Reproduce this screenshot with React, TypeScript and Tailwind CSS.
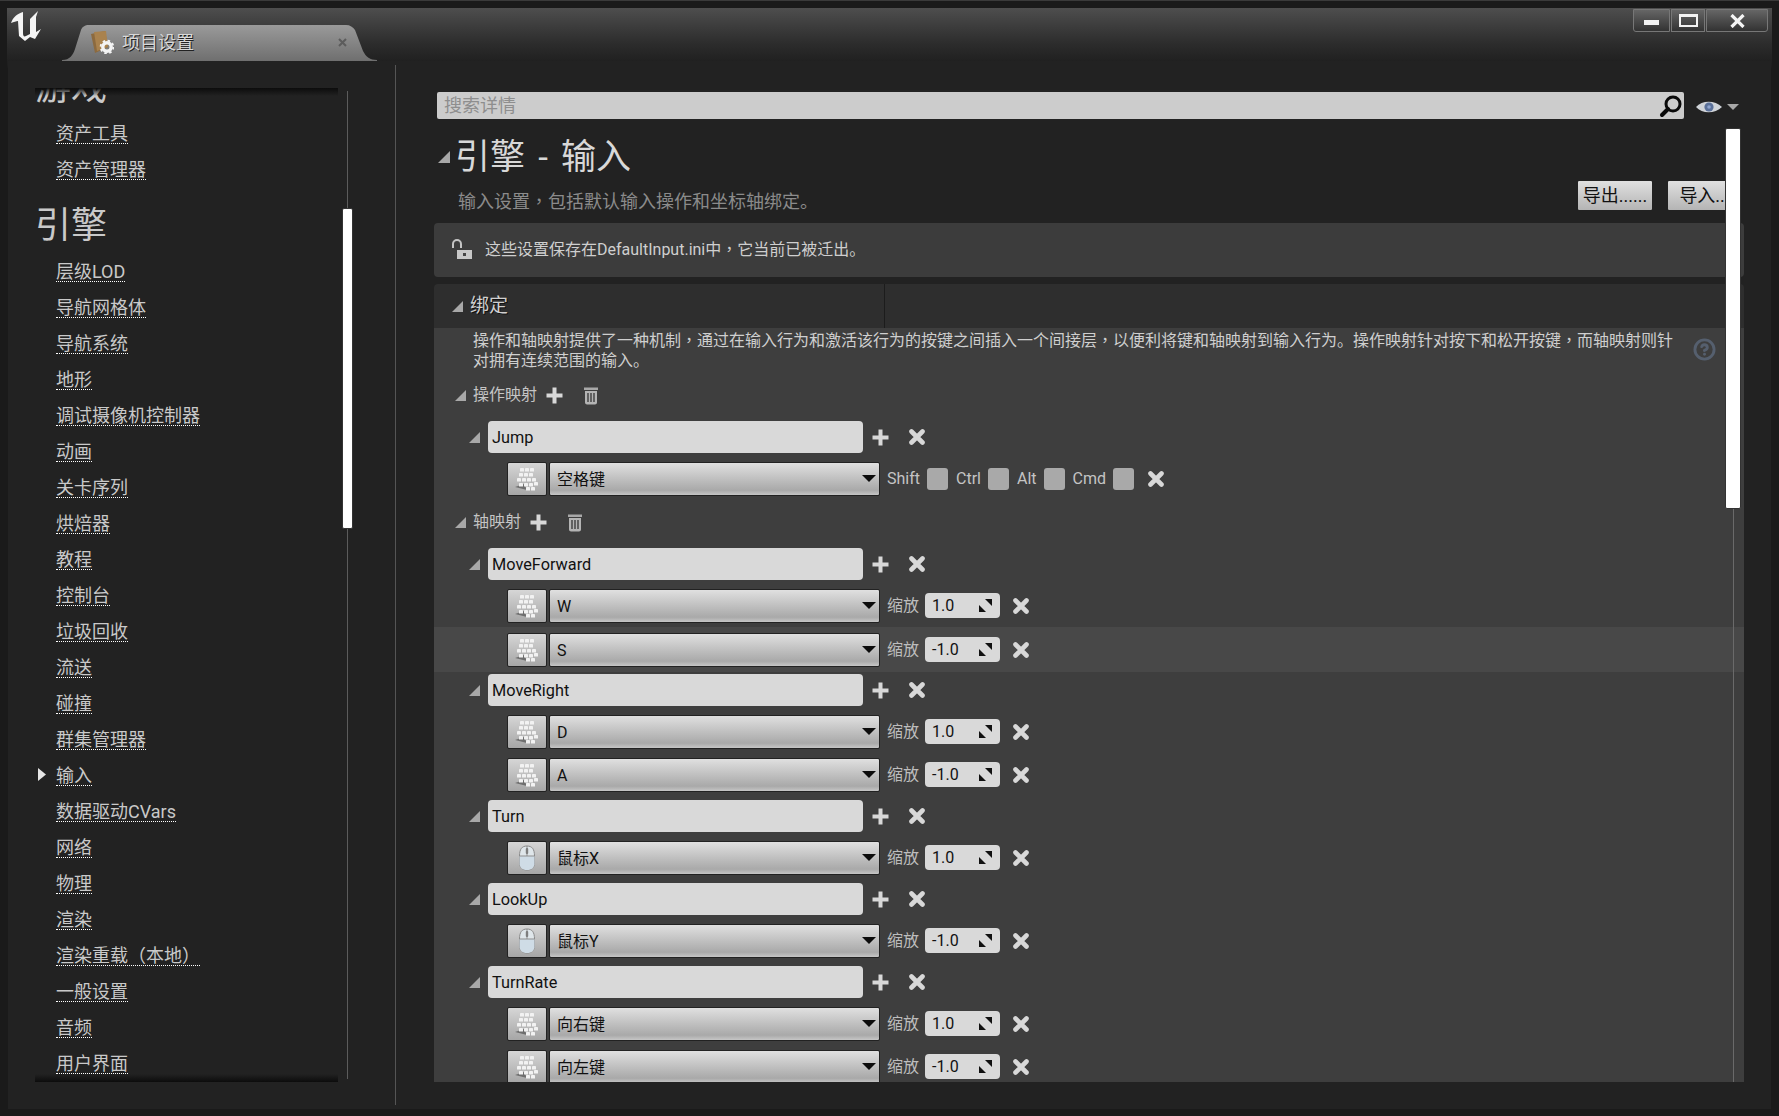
import { FC, ReactNode } from 'react'
import { CircleHelp } from 'lucide-react'

const sidebarTop = ['资产工具', '资产管理器']
const sidebarEngine = [
  '层级LOD', '导航网格体', '导航系统', '地形', '调试摄像机控制器', '动画', '关卡序列', '烘焙器', '教程', '控制台', '垃圾回收', '流送',
  '碰撞', '群集管理器', '输入', '数据驱动CVars', '网络', '物理', '渲染', '渲染重载（本地）', '一般设置', '音频', '用户界面',
]

// the reference centres full-width punctuation, the TC face does that too
const Punct: FC<{ children: ReactNode }> = ({ children }) => (
  <span className="font-['Noto_Sans_CJK_TC']">{children}</span>
)

const Triangle: FC<{ size?: number; color?: string }> = ({ size = 11, color = '#a8a8a8' }) => (
  <svg width={size} height={size} viewBox="0 0 10 10" className="shrink-0">
    <polygon points="10,0 10,10 0,10" fill={color} />
  </svg>
)

const PlusIcon = () => (
  <svg width="17" height="17" viewBox="0 0 17 17" className="shrink-0">
    <path d="M6.500 0.500h4v6h6v4h-6v6h-4v-6h-6v-4h6z" fill="#d8d8d8" />
  </svg>
)

const CrossIcon = () => (
  <svg width="16" height="16" viewBox="0 0 16 16" className="shrink-0">
    <path d="M2.500 2.500L13.500 13.500M13.500 2.500L2.500 13.500" stroke="#d8d8d8" strokeWidth="4.600" strokeLinecap="round" />
  </svg>
)

const TrashIcon = () => (
  <svg width="16" height="19" viewBox="0 0 16 19" className="shrink-0">
    <path d="M1 1.500h14v2.500H1z" fill="#a8a8a8" />
    <path d="M2 5h12v11.500c0 1-1 2-2 2H4c-1 0-2-1-2-2z" fill="#b4b4b4" />
    <path d="M5 7v9M8 7v9M11 7v9" stroke="#3e3e3e" strokeWidth="1.400" />
  </svg>
)

const KeyboardIcon = () => (
  <svg width="24" height="24" viewBox="0 0 24 24" className="-ml-[2px]">
    <path d="M1 20l12 3-3-6z" fill="#6e6e6e" />
    {[
      [6, 1], [11, 1], [16, 1],
      [5, 6], [10, 6], [15, 6],
      [3, 11], [8, 11], [13, 11], [18, 11],
      [5, 16], [10, 16], [15, 16], [20, 15],
      [12, 20], [17, 20],
    ].map(([x, y], i) => (
      <rect key={i} x={x} y={y} width="4" height="3.600" rx="0.400" fill="#f2f2f2" />
    ))}
  </svg>
)

const MouseIcon = () => (
  <svg width="18" height="26" viewBox="0 0 18 26">
    <path d="M1.500 11C1.500 4 4 1 9 1s7.500 3 7.500 10v7c0 4.500-3 7-7.500 7s-7.500-2.500-7.500-7z" fill="#dfe6ea" stroke="#8a8a8a" />
    <path d="M1.500 11h15v7c0 4.500-3 7-7.500 7s-7.500-2.500-7.500-7z" fill="#cfdce6" />
    <path d="M9 1v10M1.500 11h15" stroke="#8f8f8f" strokeWidth="1" />
    <rect x="7.800" y="3" width="2.400" height="6" rx="1" fill="#7d7d7d" />
  </svg>
)

const ScaleArrow = () => (
  <svg width="13" height="13" viewBox="0 0 13 13" className="shrink-0">
    <polygon points="6,0 13,0 13,7" fill="#111" />
    <polygon points="0,6 0,13 7,13" fill="#111" />
  </svg>
)

const Group: FC<{ label: string }> = ({ label }) => (
  <div className="h-[44px] flex items-center pl-[21px] text-[16px] text-[#c4c4c4]">
    <Triangle />
    <span className="ml-[7px] mr-[9px]">{label}</span>
    <PlusIcon />
    <span className="ml-[20px]"><TrashIcon /></span>
  </div>
)

const Mapping: FC<{ name: string }> = ({ name }) => (
  <div className="relative h-[40px] flex items-center pl-[35px]">
    <Triangle />
    <div className="ml-[8px] w-[375px] h-[32px] rounded-[4px] bg-[#d9d9d9] pl-[4px] pt-[2px] flex items-center text-[16.300px] text-[#111]">{name}</div>
    <span className="ml-[9px]"><PlusIcon /></span>
    <span className="ml-[20px]"><CrossIcon /></span>
  </div>
)

const KeyRow: FC<{ label: string; mouse?: boolean; active?: boolean; children: ReactNode }> = ({ label, mouse, active, children }) => (
  <div className={`flex items-center pl-[73px] ${active ? 'h-[45px] -mb-[2px] bg-[#484848]' : 'h-[43px]'}`}>
    <div className="w-[40px] h-[34px] rounded-[2px] border border-[#222] bg-linear-to-b from-[#d6d6d6] to-[#a6a6a6] flex items-center justify-center">
      {mouse ? <MouseIcon /> : <KeyboardIcon />}
    </div>
    <div className="ml-[2px] w-[331px] h-[34px] rounded-[2px] border border-[#222] bg-linear-to-b from-[#e0e0e0] via-[#a9a9a9] via-85% to-[#c6c6c6] flex items-center justify-between pl-[7px] pr-[3px] text-[16px] text-[#111]">
      <span className="pt-[2px]">{label}</span>
      <svg width="14" height="7" viewBox="0 0 14 7"><polygon points="0,0 14,0 7,7" fill="#0c0c0c" /></svg>
    </div>
    {children}
  </div>
)

const Scale: FC<{ value: string }> = ({ value }) => (
  <>
    <span className="ml-[7px] pt-px text-[16px] text-[#bdbdbd]">缩放</span>
    <div className="ml-[6px] w-[75px] h-[25px] rounded-[4px] bg-[#d9d9d9] flex items-center justify-between pl-[7px] pr-[8px] text-[16px] text-[#111]">
      <span className="pt-px">{value}</span>
      <ScaleArrow />
    </div>
    <span className="ml-[13px]"><CrossIcon /></span>
  </>
)

const Check: FC<{ label: string; gap: string }> = ({ label, gap }) => (
  <>
    <span className={`text-[16px] text-[#c4c4c4] ${gap}`}>{label}</span>
    <div className="ml-[7px] w-[21px] h-[22px] rounded-[3px] bg-[#a9a9a9]" />
  </>
)

const NavItem: FC<{ label: string; selected?: boolean }> = ({ label, selected }) => (
  <div className="relative h-[36px] flex items-center pl-[21px]">
    {selected && (
      <svg width="8" height="13" viewBox="0 0 8 13" className="absolute left-[3px] top-[11px]">
        <polygon points="0,0 8,6.500 0,13" fill="#e6e6e6" />
      </svg>
    )}
    <span className="pt-px text-[18px] leading-[19px] text-[#c9c9c9] border-b border-dotted border-white">
      {label.split(/([（）])/).map((part, i) => (/[（）]/.test(part) ? <Punct key={i}>{part}</Punct> : part))}
    </span>
  </div>
)

const NavHeading: FC<{ label: string }> = ({ label }) => (
  <div className="h-[66px] pt-[11px] flex items-center text-[36px] text-[#c9c9c9]">{label}</div>
)

export default function App() {
  return (
    <div className="relative w-[1779px] h-[1116px] overflow-hidden flex flex-col bg-[#1a1a1a] border-t border-[#3a3a3a] font-['Roboto','Noto_Sans_CJK_SC',sans-serif]">
      {/* title bar */}
      <div className="h-[60px] shrink-0 mx-[7px] mt-[7px] -mb-[7px] flex items-start pl-[4px] bg-linear-to-b from-[#4e4e4e] via-[#2c2c2c] via-60% to-[#1c1c1c]">
        <svg width="30" height="31" viewBox="0 0 30 31" className="mt-[3px] shrink-0">
          <path d="M0 12C2 6 6 3 12 1v21c0 3 1 4 3 3l4-2V8l8-8-2 6v15l5-3-6 10-5-2-5 4-6-5-1-15c-2 0-4 1-7 2z" fill="#f4f4f4" />
        </svg>
        <div className="relative ml-[21px] mt-[16px] w-[315px] h-[37px] flex items-center pl-[28px]">
          <svg width="315" height="37" viewBox="0 0 315 37" className="absolute left-0 top-0">
            <defs>
              <linearGradient id="tabFill" x1="0" y1="0" x2="0" y2="1">
                <stop offset="0" stopColor="#9a9a9a" />
                <stop offset="1" stopColor="#6f6f6f" />
              </linearGradient>
            </defs>
            <path d="M0 36C8 36 11 31 13 25L19 6C20 3 23 1 27 1H284C288 1 291 3 293 6L301 27C304 33 308 36 315 36V37H0z" fill="url(#tabFill)" />
          </svg>
          <svg width="24" height="23" viewBox="0 0 24 23" className="relative shrink-0">
            <path d="M1 3l14-3 3 16-13 6z" fill="#8c6a3f" />
            <path d="M4 1l12-1 2 16-11 4z" fill="#a9824e" />
            <circle cx="17" cy="16" r="4.200" fill="none" stroke="#f4f4f4" strokeWidth="3.400" />
            <circle cx="17" cy="16" r="6.400" fill="none" stroke="#f4f4f4" strokeWidth="1.800" strokeDasharray="2.500 2.500" />
          </svg>
          <span className="relative ml-[8px] text-[18px] text-[#d8d8d8] [text-shadow:1px_1px_0_#222]">项目设置</span>
          <svg width="9" height="9" viewBox="0 0 9 9" className="absolute left-[276px] top-[14px]">
            <path d="M1 1l7 7M8 1L1 8" stroke="#5c5c5c" strokeWidth="2" />
          </svg>
        </div>
        <div className="ml-auto mt-[1px] mr-[4px] flex h-[23px] gap-px">
          <div className="w-[37px] rounded-bl-[3px] border border-[#777] bg-linear-to-b from-[#666] to-[#333] flex items-center justify-center">
            <div className="w-[15px] h-[5px] mt-[3px] bg-[#f2f2f2]" />
          </div>
          <div className="w-[34px] border border-[#777] bg-linear-to-b from-[#666] to-[#333] flex items-center justify-center">
            <div className="w-[19px] h-[13px] border-2 border-t-[3px] border-[#f2f2f2]" />
          </div>
          <div className="w-[62px] rounded-br-[3px] border border-[#777] bg-linear-to-b from-[#666] to-[#333] flex items-center justify-center">
            <svg width="15" height="14" viewBox="0 0 15 14"><path d="M1.500 1l12 12M13.500 1l-12 12" stroke="#f4f4f4" strokeWidth="3.200" /></svg>
          </div>
        </div>
      </div>

      {/* body */}
      <div className="relative flex-1 min-h-0 mx-[8px] mb-[7px] bg-[#222222] flex">
        {/* sidebar */}
        <aside className="relative w-[388px] shrink-0 border-r border-[#555] my-[4px] pt-[23px] pb-[23px] pl-[27px]">
          <div className="relative w-[303px] h-full">
            <div className="h-full overflow-hidden">
              <div className="-mt-[39px]">
                <NavHeading label="游戏" />
                {sidebarTop.map((item) => <NavItem key={item} label={item} />)}
                <NavHeading label="引擎" />
                {sidebarEngine.map((item) => <NavItem key={item} label={item} selected={item === '输入'} />)}
              </div>
            </div>
            <div className="absolute left-0 right-0 top-0 h-[8px] bg-linear-to-b from-[#0c0c0c] to-transparent" />
            <div className="absolute left-0 right-0 bottom-0 h-[8px] bg-linear-to-t from-[#0c0c0c] to-transparent" />
            <div className="absolute left-[312px] top-[3px] bottom-[3px] w-px bg-[#5c5c5c]" />
            <div className="absolute left-[307px] top-[120px] w-[11px] h-[321px] rounded-[2px] bg-white border border-[#333]" />
          </div>
        </aside>

        {/* details panel */}
        <main className="relative flex-1 min-w-0 flex flex-col pl-[38px] pr-[27px] pb-[27px] pt-[31px]">
          <div className="shrink-0 ml-[3px] mr-[60px] h-[27px] rounded-[2px] bg-[#cccccc] flex items-center justify-between pl-[7px] pr-[1px] text-[18px] text-[#8e8e8e]">
            <span>搜索详情</span>
            <svg width="24" height="24" viewBox="0 0 24 24">
              <circle cx="14" cy="10" r="7" fill="none" stroke="#0a0a0a" strokeWidth="3" />
              <path d="M9 15l-6 6" stroke="#0a0a0a" strokeWidth="4" strokeLinecap="round" />
            </svg>
          </div>
          <svg width="46" height="18" viewBox="0 0 46 18" className="absolute left-[1299px] top-[37px]">
            <path d="M1 9C7 2 20 2 27 9 20 16 7 16 1 9z" fill="#cfd3d8" />
            <circle cx="14" cy="9" r="4.600" fill="#5a7099" />
            <circle cx="14" cy="9" r="1.800" fill="#8fa4cf" />
            <polygon points="32,6 44,6 38,12" fill="#a8a8a8" />
          </svg>

          <div className="shrink-0 h-[104px] pt-[15px]">
            <div className="h-[46px] flex items-center pl-[4px]">
              <Triangle size={12} />
              <span className="ml-[5px] text-[35px] leading-none text-[#d8d8d8] [word-spacing:4.500px]">引擎 - 输入</span>
            </div>
            <div className="h-[40px] flex items-center justify-between pl-[24px] pr-[2px]">
              <span className="pt-[2px] text-[18px] text-[#8b8b8b]">输入设置<Punct>，</Punct>包括默认输入操作和坐标轴绑定。</span>
              <div className="flex gap-[14px] -mt-[10px] text-[18px] text-[#111]">
                <div className="w-[76px] h-[31px] rounded-[2px] border border-[#222] bg-linear-to-b from-[#e0e0e0] to-[#b4b4b4] flex items-center justify-center">导出......</div>
                <div className="w-[75px] h-[31px] rounded-[2px] border border-[#222] bg-linear-to-b from-[#e0e0e0] to-[#b4b4b4] flex items-center justify-center">导入...</div>
              </div>
            </div>
          </div>

          <div className="shrink-0 h-[54px] rounded-[4px] bg-[#3c3c3c] flex items-center pl-[17px] text-[16px] text-[#cfcfcf]">
            <svg width="22" height="22" viewBox="0 0 22 22" className="shrink-0">
              <path d="M2 9V5a4 4 0 0 1 8 0v4" fill="none" stroke="#c4c4c4" strokeWidth="2" />
              <rect x="6" y="11" width="15" height="9" fill="#c8c8c8" />
              <rect x="12" y="14" width="3" height="3" fill="#444" />
            </svg>
            <span className="ml-[12px] pb-[2px]">这些设置保存在DefaultInput.ini中<Punct>，</Punct>它当前已被迁出。</span>
          </div>

          <div className="shrink-0 mt-[7px] h-[44px] rounded-t-[4px] bg-[#2e2e2e] flex items-center pl-[18px]">
            <Triangle size={11} />
            <span className="ml-[7px] w-[415px] h-full flex items-center border-r border-[#1c1c1c] text-[19px] text-[#d0d0d0] [text-shadow:1px_1px_0_#111]">绑定</span>
          </div>

          <div className="flex-1 min-h-0 overflow-hidden bg-[#3e3e3e]">
            <div className="h-[45px] flex justify-between pl-[39px] pr-[28px] pt-[1px] text-[16px] leading-[20px] text-[#cfcfcf]">
              <p className="whitespace-nowrap">操作和轴映射提供了一种机制<Punct>，</Punct>通过在输入行为和激活该行为的按键之间插入一个间接层<Punct>，</Punct>以便利将键和轴映射到输入行为。操作映射针对按下和松开按键<Punct>，</Punct>而轴映射则针<br />对拥有连续范围的输入。</p>
              <CircleHelp size={23} strokeWidth={3} className="text-[#555f6e] mt-[9px] shrink-0" />
            </div>
            <Group label="操作映射" />
            <Mapping name="Jump" />
            <KeyRow label="空格键">
              <div className="flex items-center ml-[7px]">
                <Check label="Shift" gap="" />
                <Check label="Ctrl" gap="ml-[8px]" />
                <Check label="Alt" gap="ml-[8px]" />
                <Check label="Cmd" gap="ml-[8px]" />
                <span className="ml-[14px]"><CrossIcon /></span>
              </div>
            </KeyRow>
            <Group label="轴映射" />
            <Mapping name="MoveForward" />
            <KeyRow label="W"><Scale value="1.0" /></KeyRow>
            <KeyRow label="S" active><Scale value="-1.0" /></KeyRow>
            <Mapping name="MoveRight" />
            <KeyRow label="D"><Scale value="1.0" /></KeyRow>
            <KeyRow label="A"><Scale value="-1.0" /></KeyRow>
            <Mapping name="Turn" />
            <KeyRow label="鼠标X" mouse><Scale value="1.0" /></KeyRow>
            <Mapping name="LookUp" />
            <KeyRow label="鼠标Y" mouse><Scale value="-1.0" /></KeyRow>
            <Mapping name="TurnRate" />
            <KeyRow label="向右键"><Scale value="1.0" /></KeyRow>
            <KeyRow label="向左键"><Scale value="-1.0" /></KeyRow>
          </div>

          {/* details scrollbar, sits over the content */}
          <div className="absolute left-[1337px] top-[448px] bottom-[27px] w-px bg-[#6a6a6a]" />
          <div className="absolute left-[1329px] top-[67px] w-[16px] h-[381px] rounded-[2px] bg-white border border-[#333]" />
        </main>
      </div>
    </div>
  )
}
